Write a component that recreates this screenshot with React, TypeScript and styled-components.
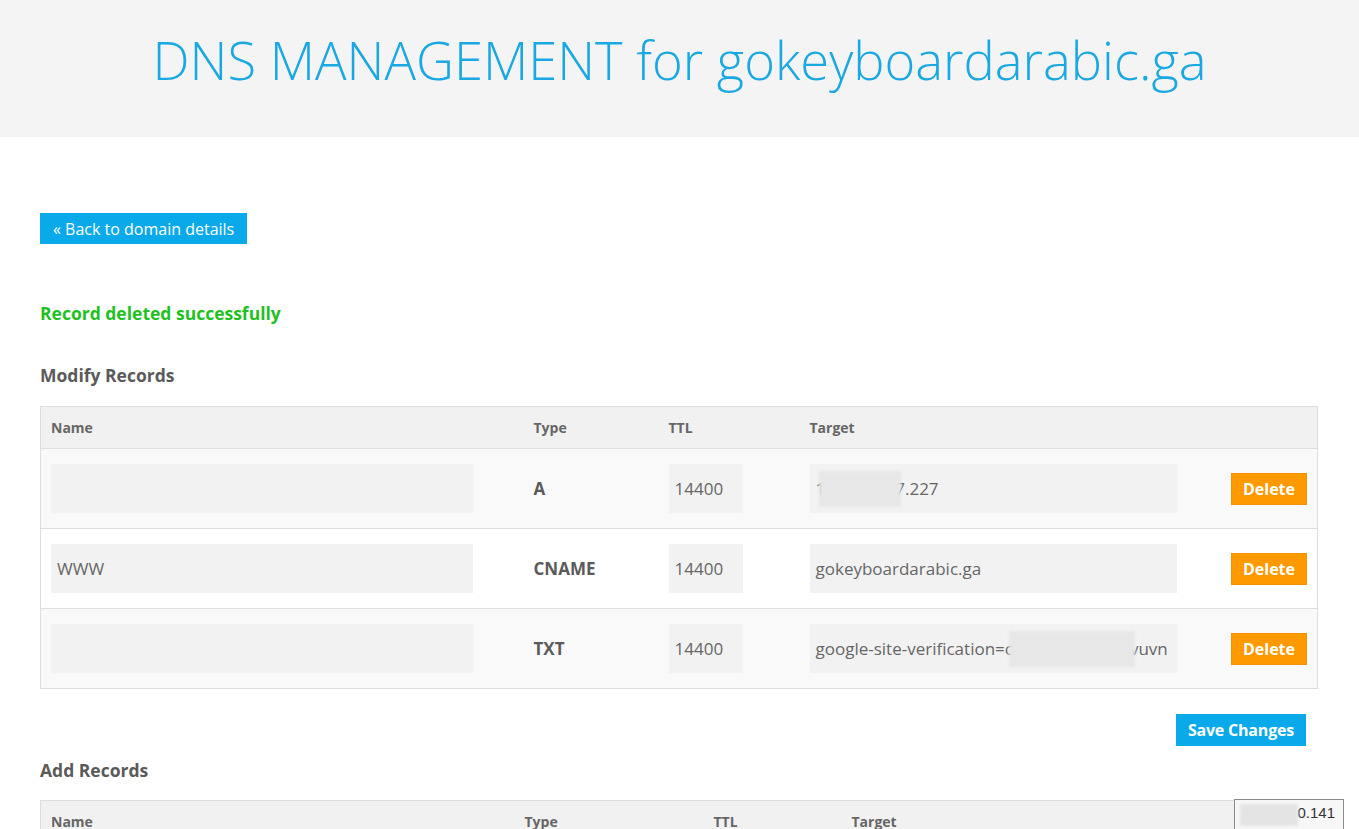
import React from 'react';
import styled, { createGlobalStyle } from 'styled-components';

// ─── Global ───────────────────────────────────────────────────────────────────

const GlobalStyle = createGlobalStyle`
  html, body {
    margin: 0;
    padding: 0;
    background: #ffffff;
  }
  body {
    font-family: "Open Sans", "Noto Sans", sans-serif;
    color: #666666;
  }
  * { box-sizing: border-box; }
`;

// ─── Types ────────────────────────────────────────────────────────────────────

interface RecordRow {
  name: string;
  type: string;
  ttl: string;
  target: React.ReactNode;
}

// ─── Styled ───────────────────────────────────────────────────────────────────

const Header = styled.header`
  height: 137px;
  background: #f4f4f4;
  display: flex;
  align-items: center;
  justify-content: center;
`;

const Title = styled.h1`
  margin: 0 0 18px;
  font-size: 52.5px;
  font-weight: 300;
  color: #19a8e2;
`;

const Main = styled.main`
  padding: 76px 41px 0 40px;
`;

const BlueButton = styled.button<{ bold?: boolean }>`
  height: ${({ bold }) => (bold ? '32px' : '31px')};
  padding: 0 ${({ bold }) => (bold ? '12px' : '13px')};
  border: none;
  border-radius: 0;
  background: #0aa9e9;
  color: #ffffff;
  font-family: inherit;
  font-size: 16px;
  font-weight: ${({ bold }) => (bold ? 700 : 400)};
  letter-spacing: ${({ bold }) => (bold ? '-0.2px' : '0')};
  cursor: pointer;
`;

const Success = styled.p`
  margin: 57px 0 0;
  font-size: 17.5px;
  font-weight: 700;
  color: #1fc11f;
  line-height: 24px;
`;

const SectionTitle = styled.h2<{ top: number }>`
  margin: ${({ top }) => top}px 0 0;
  font-size: 17.5px;
  font-weight: 700;
  color: #5a5a5a;
  line-height: 24px;
`;

const TableWrap = styled.div<{ top: number }>`
  position: relative;
  margin-top: ${({ top }) => top}px;
`;

const Table = styled.table`
  width: 100%;
  border-collapse: collapse;
  table-layout: fixed;
  border: 1px solid #dddddd;
`;

const Th = styled.th<{ w?: number }>`
  width: ${({ w }) => (w ? `${w}px` : 'auto')};
  height: 42px;
  padding: 0 10px;
  background: #f1f1f1;
  border-bottom: 1px solid #dddddd;
  text-align: left;
  font-size: 14px;
  font-weight: 700;
  color: #666666;
`;

const Tr = styled.tr<{ striped: boolean }>`
  height: 80px;
  background: ${({ striped }) => (striped ? '#f9f9f9' : '#ffffff')};
  border-bottom: 1px solid #dddddd;
`;

const Td = styled.td<{ align?: string }>`
  padding: 0 10px;
  vertical-align: middle;
  text-align: ${({ align }) => align || 'left'};
`;

const Field = styled.div<{ w: number }>`
  width: ${({ w }) => w}px;
  height: 49px;
  padding: 0 6px;
  background: #f2f2f2;
  display: flex;
  align-items: center;
  font-size: 17px;
  color: #666666;
  white-space: nowrap;
  overflow: hidden;
`;

const TypeLabel = styled.span`
  font-size: 17px;
  font-weight: 700;
  color: #5a5a5a;
`;

const DeleteButton = styled.button`
  height: 32px;
  width: 76px;
  border: 1px solid #f49100;
  border-radius: 0;
  background: #ff9900;
  color: #ffffff;
  font-family: inherit;
  font-size: 16px;
  font-weight: 700;
  cursor: pointer;
`;

const Blur = styled.span<{ w: number; ml: number; mr: number }>`
  position: relative;
  z-index: 1;
  display: inline-block;
  width: ${({ w }) => w}px;
  height: 36px;
  margin-left: ${({ ml }) => ml}px;
  margin-right: ${({ mr }) => mr}px;
  background: #e7e7e7;
  filter: blur(1.5px);
`;

const Actions = styled.div`
  display: flex;
  justify-content: flex-end;
  padding: 25px 12px 0 0;
`;

const Suggest = styled.div`
  position: absolute;
  top: -1px;
  left: 1194px;
  width: 110px;
  height: 40px;
  border: 1px solid #8a8a8a;
  background: #f7f7f7;
  display: flex;
  align-items: flex-start;
  padding: 4px 8px 0 5px;
  font-family: "Liberation Sans", Arial, sans-serif;
  font-size: 15px;
  color: #333333;
`;

const SuggestBlur = styled.span`
  display: inline-block;
  width: 62px;
  height: 22px;
  margin-right: -1px;
  position: relative;
  z-index: 1;
  background: #e4e4e4;
  filter: blur(1.5px);
`;

// ─── Data ─────────────────────────────────────────────────────────────────────

const RECORDS: RecordRow[] = [
  {
    name: '',
    type: 'A',
    ttl: '14400',
    target: (
      <>
        1<Blur w={82} ml={-6} mr={-6} />7.227
      </>
    ),
  },
  { name: 'WWW', type: 'CNAME', ttl: '14400', target: 'gokeyboardarabic.ga' },
  {
    name: '',
    type: 'TXT',
    ttl: '14400',
    target: (
      <>
        google-site-verification=c<Blur w={126} ml={-4} mr={-5} />vuvn
      </>
    ),
  },
];

// ─── Component ────────────────────────────────────────────────────────────────

const App: React.FC = () => (
  <>
    <GlobalStyle />
    <Header>
      <Title>DNS MANAGEMENT for gokeyboardarabic.ga</Title>
    </Header>
    <Main>
      <BlueButton>« Back to domain details</BlueButton>
      <Success>Record deleted successfully</Success>

      <SectionTitle top={38}>Modify Records</SectionTitle>
      <TableWrap top={19}>
        <Table>
          <thead>
            <tr>
              <Th w={483}>Name</Th>
              <Th w={135}>Type</Th>
              <Th w={141}>TTL</Th>
              <Th w={390}>Target</Th>
              <Th />
            </tr>
          </thead>
          <tbody>
            {RECORDS.map((r, i) => (
              <Tr key={i} striped={i % 2 === 0}>
                <Td>
                  <Field w={422}>{r.name}</Field>
                </Td>
                <Td>
                  <TypeLabel>{r.type}</TypeLabel>
                </Td>
                <Td>
                  <Field w={74}>{r.ttl}</Field>
                </Td>
                <Td>
                  <Field w={367}>{r.target}</Field>
                </Td>
                <Td align="right">
                  <DeleteButton>Delete</DeleteButton>
                </Td>
              </Tr>
            ))}
          </tbody>
        </Table>
      </TableWrap>

      <Actions>
        <BlueButton bold>Save Changes</BlueButton>
      </Actions>

      <SectionTitle top={12}>Add Records</SectionTitle>
      <TableWrap top={18}>
        <Table>
          <thead>
            <tr>
              <Th w={474}>Name</Th>
              <Th w={189}>Type</Th>
              <Th w={138}>TTL</Th>
              <Th>Target</Th>
            </tr>
          </thead>
          <tbody>
            <Tr striped>
              <Td>
                <Field w={422} />
              </Td>
              <Td>
                <Field w={150}>A</Field>
              </Td>
              <Td>
                <Field w={100}>14400</Field>
              </Td>
              <Td>
                <Field w={367} />
              </Td>
            </Tr>
          </tbody>
        </Table>
        <Suggest>
          <SuggestBlur />0.141
        </Suggest>
      </TableWrap>
    </Main>
  </>
);

export default App;
